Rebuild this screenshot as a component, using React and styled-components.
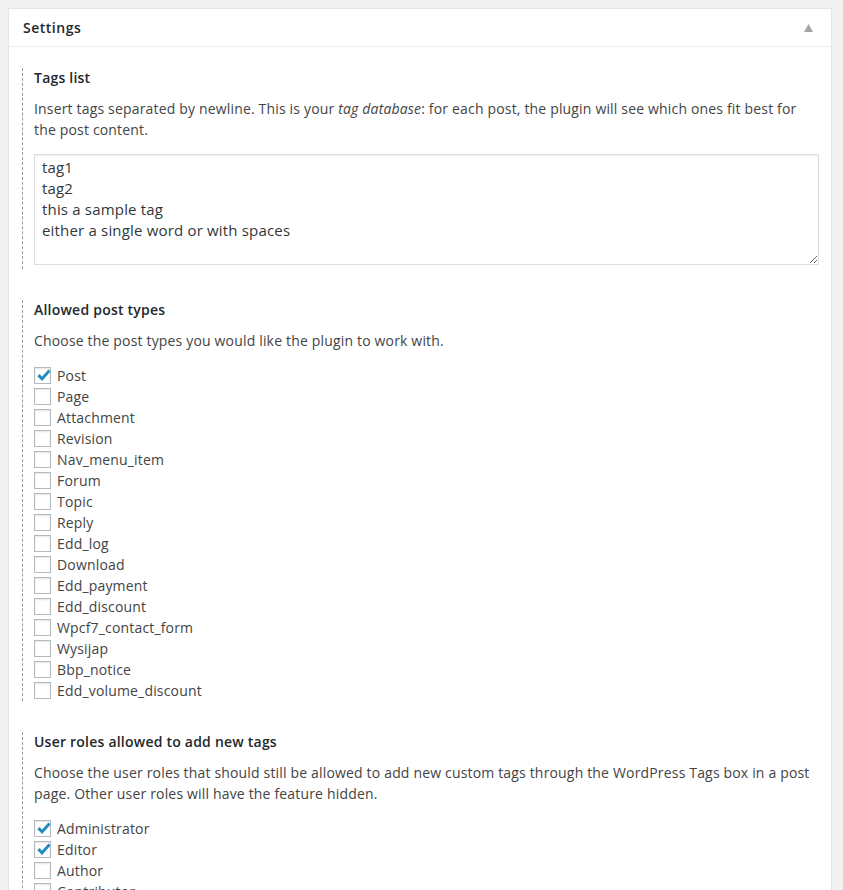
import React from 'react';
import styled, { createGlobalStyle } from 'styled-components';

const GlobalStyle = createGlobalStyle`
  html, body {
    margin: 0;
    padding: 0;
    background: #f1f1f1;
  }
  body {
    font-family: 'Open Sans', 'Liberation Sans', sans-serif;
    font-size: 14px;
    letter-spacing: 0.17px;
    color: #444;
  }
`;

const Postbox = styled.div`
  margin: 8px 11px 0 8px;
  background: #fff;
  border: 1px solid #e5e5e5;
  box-shadow: 0 1px 1px rgba(0, 0, 0, 0.04);
`;

const Header = styled.div`
  display: flex;
  align-items: center;
  justify-content: space-between;
  height: 37px;
  padding: 0 13px 0 14px;
  border-bottom: 1px solid #eee;
  h2 {
    margin: 0;
    font-size: 14px;
    font-weight: 600;
    letter-spacing: 0.5px;
    color: #23282d;
  }
`;

const Toggle = styled.svg`
  width: 9px;
  height: 8px;
  margin-right: 5px;
  fill: #a0a5aa;
`;

const Inside = styled.div`
  padding: 21px 12px 12px 13px;
`;

const Section = styled.section`
  border-left: 1px dashed #999;
  padding-left: 11px;
  & + & {
    margin-top: 31px;
  }
`;

const Title = styled.h3`
  margin: 0;
  font-size: 14px;
  line-height: 20px;
  font-weight: 600;
  letter-spacing: 0.22px;
  color: #23282d;
`;

const Description = styled.p`
  margin: 10px 0 14px;
  line-height: 21px;
  color: #444;
`;

const TagsArea = styled.textarea`
  display: block;
  box-sizing: border-box;
  width: 100%;
  height: 111px;
  margin: 0;
  padding: 2px 7px;
  border: 1px solid #ddd;
  box-shadow: inset 0 1px 2px rgba(0, 0, 0, 0.07);
  font-family: 'Open Sans', 'Liberation Sans', sans-serif;
  font-size: 15px;
  letter-spacing: 0.18px;
  line-height: 21px;
  color: #32373c;
  background: #fff;
  outline: none;
  resize: vertical;
`;

const Spacer = styled.div`
  height: 4px;
`;

const CheckList = styled.div`
  display: flex;
  flex-direction: column;
`;

const Row = styled.label`
  display: flex;
  align-items: center;
  height: 21px;
  line-height: 21px;
  color: #444;
`;

const Box = styled.span`
  box-sizing: border-box;
  position: relative;
  display: inline-block;
  flex: none;
  width: 17px;
  height: 17px;
  margin-right: 6px;
  border: 1px solid #b4b9be;
  background: #fff;
  box-shadow: inset 0 1px 2px rgba(0, 0, 0, 0.1);
  svg {
    position: absolute;
    left: 0;
    top: -1px;
    width: 17px;
    height: 17px;
  }
`;

const Check = ({ checked }) => (
  <Box>
    {checked && (
      <svg viewBox="0 0 16 16">
        <path
          d="M2.2 8.6 L4.4 6.6 L6.6 9.2 L12.6 2.4 L14.6 4.2 L6.7 13.2 Z"
          fill="#1e8cbe"
        />
      </svg>
    )}
  </Box>
);

const postTypes = [
  ['Post', true],
  ['Page', false],
  ['Attachment', false],
  ['Revision', false],
  ['Nav_menu_item', false],
  ['Forum', false],
  ['Topic', false],
  ['Reply', false],
  ['Edd_log', false],
  ['Download', false],
  ['Edd_payment', false],
  ['Edd_discount', false],
  ['Wpcf7_contact_form', false],
  ['Wysijap', false],
  ['Bbp_notice', false],
  ['Edd_volume_discount', false],
];

const roles = [
  ['Administrator', true],
  ['Editor', true],
  ['Author', false],
  ['Contributor', false],
  ['Subscriber', false],
];

const App = () => {
  return (
    <>
      <GlobalStyle />
      <Postbox>
        <Header>
          <h2>Settings</h2>
          <Toggle viewBox="0 0 9 8">
            <polygon points="4.5,0 9,8 0,8" />
          </Toggle>
        </Header>
        <Inside>
          <Section>
            <Title>Tags list</Title>
            <Description>
              Insert tags separated by newline. This is your <em>tag database</em>: for
              each post, the plugin will see which ones fit best for the post content.
            </Description>
            <TagsArea
              defaultValue={'tag1\ntag2\nthis a sample tag\neither a single word or with spaces'}
            />
            <Spacer />
          </Section>
          <Section>
            <Title>Allowed post types</Title>
            <Description>Choose the post types you would like the plugin to work with.</Description>
            <CheckList>
              {postTypes.map(([name, on]) => (
                <Row key={name}>
                  <Check checked={on} />
                  {name}
                </Row>
              ))}
            </CheckList>
          </Section>
          <Section>
            <Title>User roles allowed to add new tags</Title>
            <Description>
              Choose the user roles that should still be allowed to add new custom tags
              through the WordPress Tags box in a post page. Other user roles will have
              the feature hidden.
            </Description>
            <CheckList>
              {roles.map(([name, on]) => (
                <Row key={name}>
                  <Check checked={on} />
                  {name}
                </Row>
              ))}
            </CheckList>
          </Section>
        </Inside>
      </Postbox>
    </>
  );
};

export default App;
